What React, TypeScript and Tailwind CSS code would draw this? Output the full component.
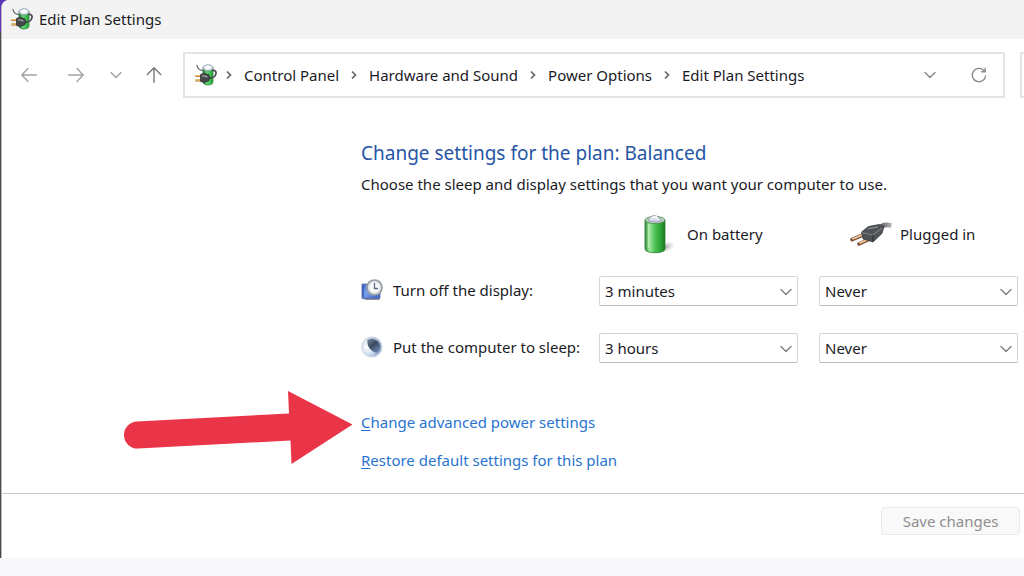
import React, { useState } from 'react';

const crumbs = ['Control Panel', 'Hardware and Sound', 'Power Options', 'Edit Plan Settings'];

const timeouts = ['1 minute', '3 minutes', '5 minutes', '10 minutes', '30 minutes', '1 hour', '3 hours', 'Never'];

const ChevronDown: React.FC<{ className?: string }> = ({ className = '' }) => (
  <svg className={`w-3 h-3 ${className}`} viewBox="0 0 12 12" fill="none" stroke="currentColor" strokeWidth="1.4" strokeLinecap="round" strokeLinejoin="round">
    <path d="M1 3.5l5 5 5-5" />
  </svg>
);

const ChevronRight: React.FC = () => (
  <svg className="w-[6px] h-[10px] shrink-0 text-[#666]" viewBox="0 0 6 10" fill="none" stroke="currentColor" strokeWidth="1.7">
    <path d="M1 1.5L4.5 5 1 8.5" />
  </svg>
);

const PowerIcon: React.FC = () => (
  <svg className="w-[22px] h-[22px] shrink-0" viewBox="0 0 22 22" fill="none">
    <defs>
      <linearGradient id="cell" x1="0" x2="1" y1="0" y2="0">
        <stop offset="0" stopColor="#1d7a2c" />
        <stop offset="0.4" stopColor="#62d873" />
        <stop offset="1" stopColor="#22a035" />
      </linearGradient>
    </defs>
    <path d="M8 3.500v14.500c0 4 10 4 10 0v-14.500z" fill="url(#cell)" stroke="#2c7436" strokeWidth="0.7" />
    <ellipse cx="13" cy="3.800" rx="5" ry="3" fill="#dfe6f5" stroke="#8591a8" strokeWidth="0.8" />
    <ellipse cx="13" cy="3.200" rx="2.800" ry="1.600" fill="#fff" />
    <path d="M2 1.500c.5 3 2 4.500 5.500 5" stroke="#6b6e73" strokeWidth="1.3" strokeLinecap="round" />
    <path d="M14 14c4 .5 6.500-2 7-4.500.4-2-1-3.500-3.300-3" stroke="#4b4d50" strokeWidth="1.7" strokeLinecap="round" />
    <path d="M.5 12h6M.5 16.500h6" stroke="#b27328" strokeWidth="2.2" />
    <path d="M.5 11.600h6M.5 16.100h6" stroke="#f0bb68" strokeWidth="1.1" />
    <path d="M5.500 10.500l3-1.200 5 1.200 1.500 3.200-1.500 3.300-5 1.500-3-1.200z" fill="#46474a" stroke="#2a2b2d" strokeWidth="0.7" />
    <path d="M7 11.800l3.500.3 2 1.200" stroke="#a2a4a8" strokeWidth="1.300" />
  </svg>
);

const BatteryIcon: React.FC = () => (
  <svg className="w-8 h-10 shrink-0" viewBox="0 0 32 40" fill="none">
    <defs>
      <linearGradient id="battery" x1="0" x2="1" y1="0" y2="0">
        <stop offset="0" stopColor="#2f8a36" />
        <stop offset="0.22" stopColor="#9be79c" />
        <stop offset="0.5" stopColor="#4fc255" />
        <stop offset="0.8" stopColor="#2aa033" />
        <stop offset="1" stopColor="#1d7a25" />
      </linearGradient>
      <radialGradient id="shade">
        <stop offset="0" stopColor="#777" stopOpacity="0.6" />
        <stop offset="1" stopColor="#999" stopOpacity="0" />
      </radialGradient>
    </defs>
    <ellipse cx="23" cy="33" rx="9" ry="5" fill="url(#shade)" transform="rotate(-22 23 33)" />
    <path d="M2 6v29c0 5 20 5 20 0V6z" fill="url(#battery)" stroke="#2d7a35" strokeWidth="0.8" />
    <ellipse cx="12" cy="6" rx="10" ry="3.600" fill="#b9d3bb" stroke="#498a50" strokeWidth="0.8" />
    <path d="M5 6.500c1-2.500 3-4.800 6-5 3-.2 5 2.500 8 5-3 1.800-11 1.800-14 0z" fill="#d9d9ec" stroke="#8c8bab" strokeWidth="0.7" />
    <path d="M8.500 4l4.500-1.500L15 5" stroke="#fff" strokeWidth="1.400" />
    <path d="M5.500 10v24" stroke="#d2f7cf" strokeOpacity="0.6" strokeWidth="1.500" />
  </svg>
);

const PlugIcon: React.FC = () => (
  <svg className="w-[42px] h-6 shrink-0" viewBox="0 0 42 24" fill="none">
    <defs>
      <linearGradient id="cord" x1="0" x2="1" y1="0" y2="0">
        <stop offset="0" stopColor="#46484b" />
        <stop offset="1" stopColor="#b6b8ba" />
      </linearGradient>
    </defs>
    <path d="M28 7.500c4-5 8-5.500 13.500-4" stroke="url(#cord)" strokeWidth="4.500" />
    <path d="M1 18l13-5.500M8 22.300l12-5.500" stroke="#7b5238" strokeWidth="3.600" />
    <path d="M1.500 17.300l12-5M8.500 21.600l11-5" stroke="#edc39c" strokeWidth="1.800" />
    <path d="M.5 18.200l2-.8M7.500 22.500l2-.8" stroke="#704329" strokeWidth="2" />
    <path d="M11.500 10l7-5.500L29 2.500l5 2-2 7L23 20l-10-3z" fill="#4f5256" stroke="#36383b" strokeWidth="0.7" />
    <path d="M12 10.500l11 2.500 9-7" stroke="#7d8185" strokeWidth="1.100" />
    <path d="M23 13v6.500" stroke="#2b2d30" strokeWidth="1" />
    <path d="M18 6.800l10-2" stroke="#8c9094" strokeWidth="1.200" />
  </svg>
);

const DisplayIcon: React.FC = () => (
  <svg className="w-[22px] h-[22px] shrink-0" viewBox="0 0 22 22" fill="none">
    <defs>
      <linearGradient id="screen" x1="0" x2="0.6" y1="0" y2="1">
        <stop offset="0" stopColor="#4a70d2" />
        <stop offset="0.6" stopColor="#7ba2ee" />
        <stop offset="1" stopColor="#4a6cc8" />
      </linearGradient>
    </defs>
    <path d="M1.500 19h17v2h-14z" fill="#8b8d94" />
    <path d="M1 5h18v14.500H1z" fill="url(#screen)" stroke="#5b6ca2" strokeWidth="0.8" />
    <path d="M2 6v12.500" stroke="#3a58b0" strokeWidth="1.500" />
    <circle cx="13.500" cy="8.500" r="7.500" fill="#e6e9ed" stroke="#989ca3" strokeWidth="1.700" />
    <circle cx="13.500" cy="8.500" r="5.700" fill="#f7f9fa" stroke="#c4c9cf" strokeWidth="0.7" />
    <path d="M13.500 4v5.500H17" stroke="#5b6b80" strokeWidth="1.300" />
  </svg>
);

const SleepIcon: React.FC = () => (
  <svg className="w-[22px] h-[22px] shrink-0" viewBox="0 0 22 22" fill="none">
    <defs>
      <radialGradient id="moon" cx="0.25" cy="0.5" r="0.75">
        <stop offset="0" stopColor="#fff" />
        <stop offset="0.45" stopColor="#d5e2f2" />
        <stop offset="1" stopColor="#7f9dc4" />
      </radialGradient>
      <linearGradient id="dark" x1="0" x2="0.7" y1="0" y2="1">
        <stop offset="0" stopColor="#7a879b" />
        <stop offset="0.5" stopColor="#3d4960" />
        <stop offset="1" stopColor="#6c89b0" />
      </linearGradient>
    </defs>
    <circle cx="11" cy="11" r="10" fill="url(#moon)" stroke="#d2d7de" strokeWidth="1.200" />
    <path d="M6.500 4C11 1.500 18 4 19 9.500c.5 4-1 6.500-3.300 7.500C12 16.500 5 11 6.500 4z" fill="url(#dark)" />
  </svg>
);

interface TimeoutSelectProps {
  id: string;
  label?: string;
  initial: string;
}

const TimeoutSelect: React.FC<TimeoutSelectProps> = ({ id, label, initial }) => {
  const [value, setValue] = useState(initial);

  return (
    <div className="relative">
      <select
        id={id}
        aria-label={label}
        value={value}
        onChange={e => setValue(e.target.value)}
        className="block w-full h-[30px] pl-[5px] pr-8 pb-px appearance-none rounded-xs border border-[#d4d4d6] border-b-[#bcbcc0] bg-white text-[#1b1b1f] outline-none"
      >
        {timeouts.map(t => (
          <option key={t}>{t}</option>
        ))}
      </select>
      <ChevronDown className="absolute right-[6px] top-[10px] pointer-events-none text-[#808080]" />
    </div>
  );
};

const TitleBar: React.FC = () => (
  <header className="flex items-center gap-[6px] h-[39px] pl-[9px] pb-[2px] bg-[#f3f3f3]">
    <PowerIcon />
    <h1>Edit Plan Settings</h1>
  </header>
);

const NavBar: React.FC = () => (
  <nav className="flex items-center mt-[13px]">
    <div className="flex items-center w-[181px] shrink-0 pl-[19px]">
      <button type="button" aria-label="Back" className="text-[#a3a3a3]">
        <svg className="w-4 h-4" viewBox="0 0 16 16" fill="none" stroke="currentColor" strokeWidth="1.400" strokeLinecap="round" strokeLinejoin="round"><path d="M15.300 8H.8M7 1.500L.8 8 7 14.500" /></svg>
      </button>
      <button type="button" aria-label="Forward" className="ml-[31px] text-[#a3a3a3]">
        <svg className="w-4 h-4" viewBox="0 0 16 16" fill="none" stroke="currentColor" strokeWidth="1.400" strokeLinecap="round" strokeLinejoin="round"><path d="M.7 8h14.500M9 1.500L15.200 8 9 14.500" /></svg>
      </button>
      <button type="button" aria-label="Recent locations" className="ml-[26px] text-[#a3a3a3]">
        <ChevronDown />
      </button>
      <button type="button" aria-label="Up" className="ml-6 text-[#777]">
        <svg className="w-4 h-4" viewBox="0 0 16 16" fill="none" stroke="currentColor" strokeWidth="1.400" strokeLinecap="round" strokeLinejoin="round"><path d="M8 15.300V.8M1.300 7.500L8 .8l6.700 6.700" /></svg>
      </button>
    </div>
    <div className="flex flex-1 items-center h-[46px] pl-[10px] pr-4 pb-px border-2 border-[#e4e4e4] bg-white">
      <PowerIcon />
      <ol className="flex items-center ml-[9px] whitespace-nowrap">
        {crumbs.map(name => (
          <li key={name} className="flex items-center">
            <ChevronRight />
            <a href="#" className="mx-3">{name}</a>
          </li>
        ))}
      </ol>
      <button type="button" aria-label="Previous locations" className="ml-auto text-[#868686]">
        <ChevronDown />
      </button>
      <button type="button" aria-label="Refresh" className="ml-[35px] text-[#8c8c8c]">
        <svg className="w-4 h-4" viewBox="0 0 18 18" fill="none" stroke="currentColor" strokeWidth="1.600"><path d="M16.500 9.500A7.500 7.500 0 1 1 14.300 3.700L15.800 5.200M16 .8v4.600h-4.600" /></svg>
      </button>
    </div>
    <div className="w-1 h-[46px] ml-[15px] border-2 border-r-0 border-[#e4e4e4]" />
  </nav>
);

const App: React.FC = () => {
  return (
    <div className="min-h-screen bg-[#f8f8fa] font-['Noto_Sans','Segoe_UI',sans-serif] text-[15px] leading-5 text-[#1b1b1f]">
      {/* strip of desktop showing at the window's left edge */}
      <div className="relative pl-px bg-[linear-gradient(to_bottom,#5b34b5_32px,#4a494f_32px)]">
        <div className="border-l border-[#bdbdc0] rounded-tl-lg bg-white overflow-hidden">
          <TitleBar />
          <NavBar />

          <main className="pl-[359px] pr-[6px] pt-[41px] pb-[23px]">
            <h2 className="text-[19px] leading-7 text-[#2655a5]">Change settings for the plan: Balanced</h2>
            <p className="mt-[7px] whitespace-nowrap">Choose the sleep and display settings that you want your computer to use.</p>

            <div className="grid grid-cols-[217px_1fr_1fr] gap-x-[21px] items-center mt-5">
              <div className="col-start-2 flex items-center gap-3 pl-11">
                <BatteryIcon />
                <span>On battery</span>
              </div>
              <div className="flex items-center gap-2 pl-[31px]">
                <PlugIcon />
                <span>Plugged in</span>
              </div>
            </div>

            <div className="grid grid-cols-[217px_1fr_1fr] gap-x-[21px] gap-y-[27px] items-center mt-[22px]">
              <label htmlFor="display-battery" className="flex items-center gap-[10px] pb-[2px] whitespace-nowrap">
                <DisplayIcon />
                Turn off the display:
              </label>
              <TimeoutSelect id="display-battery" initial="3 minutes" />
              <TimeoutSelect id="display-plugged" label="Turn off the display, plugged in" initial="Never" />

              <label htmlFor="sleep-battery" className="flex items-center gap-[10px] pb-[2px] whitespace-nowrap">
                <SleepIcon />
                Put the computer to sleep:
              </label>
              <TimeoutSelect id="sleep-battery" initial="3 hours" />
              <TimeoutSelect id="sleep-plugged" label="Put the computer to sleep, plugged in" initial="Never" />
            </div>

            <div className="flex flex-col items-start gap-[18px] mt-[49px] text-[#2874cf]">
              <a href="#"><span className="underline underline-offset-2">C</span>hange advanced power settings</a>
              <a href="#"><span className="underline underline-offset-2">R</span>estore default settings for this plan</a>
            </div>
          </main>

          <footer className="flex justify-end pt-[13px] pb-[23px] pr-1 border-t border-[#c9c9c9]">
            <button type="button" disabled className="w-[139px] h-7 rounded-sm border border-[#e9e9e9] bg-[#f9f9f9] text-[#8e8e8e]">
              Save changes
            </button>
          </footer>
        </div>

        {/* callout arrow over the form */}
        <svg className="absolute left-[124px] top-[391px] w-[229px] h-[74px]" viewBox="0 0 229 74" fill="#e93547">
          <path d="M13 30.500L165 22.500 164 0 228.500 33.500 167.500 73 166.500 49.500 14 57.500A13.500 13.500 0 0 1 13 30.500z" />
        </svg>
      </div>
    </div>
  );
};

export default App;
